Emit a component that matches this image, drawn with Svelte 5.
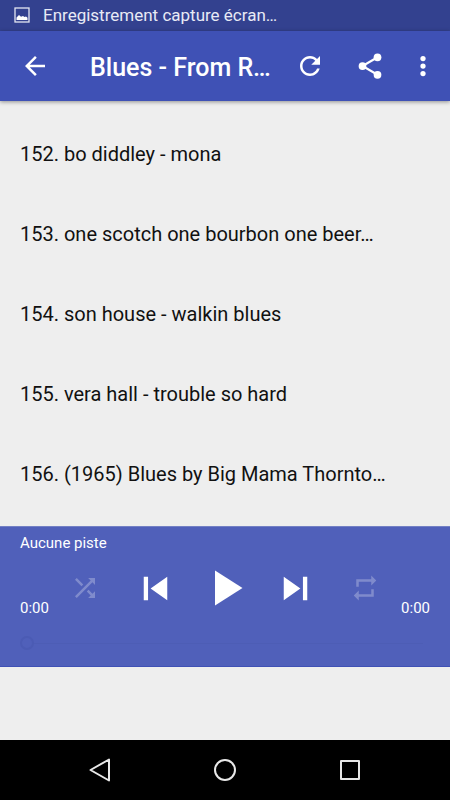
<script>
  const tracks = [
    '152. bo diddley - mona',
    '153. one scotch one bourbon one beer…',
    '154. son house - walkin blues',
    '155. vera hall - trouble so hard',
    '156. (1965) Blues by Big Mama Thornto…'
  ];
  let position = $state(0);
</script>

<div class="screen">
  <div class="status">
    <svg width="16" height="16" viewBox="0 0 16 16" aria-hidden="true">
      <rect x="1" y="1" width="14" height="14" fill="none" stroke="#e4e6f2" stroke-width="1.3" />
      <path d="M2.500 13V10.500L5 8l2 1.800L9 9l1.500 1.100L12 9.500l1.500 1.300V13z" fill="#fff" />
    </svg>
    <span>Enregistrement capture écran…</span>
  </div>

  <header>
    <button class="back" aria-label="Retour">
      <svg class="icon" viewBox="0 0 24 24"><path d="M20 11H7.830l5.590-5.590L12 4l-8 8 8 8 1.410-1.410L7.830 13H20v-2z" /></svg>
    </button>
    <h1>Blues - From R…</h1>
    <button class="action" aria-label="Actualiser">
      <svg class="icon" viewBox="0 0 24 24"><path d="M17.650 6.350C16.200 4.900 14.210 4 12 4c-4.420 0-7.990 3.580-7.990 8s3.570 8 7.990 8c3.730 0 6.840-2.550 7.730-6h-2.080c-.82 2.330-3.040 4-5.650 4-3.310 0-6-2.690-6-6s2.690-6 6-6c1.660 0 3.140.69 4.220 1.780L13 11h7V4l-2.350 2.350z" /></svg>
    </button>
    <button class="action" aria-label="Partager">
      <svg class="icon" viewBox="0 0 24 24">
        <path d="M18 5L6 12l12 7" fill="none" stroke="#fff" stroke-width="1.700" />
        <circle cx="18" cy="5" r="3.100" /><circle cx="6" cy="12" r="3.100" /><circle cx="18" cy="19" r="3.100" />
      </svg>
    </button>
    <button class="more" aria-label="Plus d'options">
      <svg class="icon" viewBox="0 0 24 24"><circle cx="12" cy="6" r="2.100" /><circle cx="12" cy="12" r="2.100" /><circle cx="12" cy="18" r="2.100" /></svg>
    </button>
  </header>

  <ul>
    {#each tracks as track}
      <li><button class="track">{track}</button></li>
    {/each}
  </ul>

  <section class="player" aria-label="Lecteur">
    <p>Aucune piste</p>
    <div class="deck">
      <span class="time">0:00</span>
      <div class="controls">
        <button class="dim" aria-label="Aléatoire">
          <svg class="icon" viewBox="0 0 24 24"><path d="M10.590 9.170L5.410 4 4 5.410l5.170 5.170 1.420-1.410zM14.500 4l2.040 2.040L4 18.590 5.410 20 17.960 7.460 20 9.500V4h-5.500zm.33 9.410l-1.410 1.410 3.130 3.130L14.500 20H20v-5.500l-2.040 2.040-3.130-3.130z" /></svg>
        </button>
        <button aria-label="Précédent">
          <svg class="skip" viewBox="0 0 24 24"><path d="M6 6h2.200v12H6zm3.500 6l8.500 6V6z" /></svg>
        </button>
        <button aria-label="Lecture">
          <svg class="play" viewBox="0 0 24 24"><path d="M8 5v14l11-7z" /></svg>
        </button>
        <button aria-label="Suivant">
          <svg class="skip" viewBox="0 0 24 24"><path d="M6 18l8.500-6L6 6v12zM15.800 6v12H18V6h-2.200z" /></svg>
        </button>
        <button class="dim" aria-label="Répéter">
          <svg class="icon" viewBox="0 0 24 24"><path d="M7 7h10v3l4-4-4-4v3H5v6h2V7zm10 10H7v-3l-4 4 4 4v-3h12v-6h-2v4z" /></svg>
        </button>
      </div>
      <span class="time">0:00</span>
    </div>
    <input type="range" min="0" max="100" bind:value={position} aria-label="Position de lecture" />
  </section>

  <div class="rest"></div>

  <nav>
    <button aria-label="Retour système">
      <svg class="icon line" viewBox="0 0 30 30"><path d="M24 4.500v21L5.500 15z" /></svg>
    </button>
    <button aria-label="Accueil">
      <svg class="icon line" viewBox="0 0 30 30"><circle cx="15" cy="15" r="10" /></svg>
    </button>
    <button aria-label="Applications récentes">
      <svg class="icon line" viewBox="0 0 30 30"><rect x="6" y="6" width="18" height="18" /></svg>
    </button>
  </nav>
</div>

<style>
  :global(body) {
    margin: 0;
    background: #eee;
  }
  .screen {
    display: flex;
    flex-direction: column;
    min-height: 100vh;
    background: #eee;
    font-family: Roboto, "Liberation Sans", sans-serif;
    color: #fff;
  }
  button {
    display: flex;
    align-items: center;
    justify-content: center;
    flex: none;
    margin: 0;
    padding: 0;
    border: 0;
    background: none;
    color: inherit;
    font: inherit;
    cursor: pointer;
  }
  svg {
    display: block;
    flex: none;
    fill: #fff;
  }
  .icon {
    width: 30px;
    height: 30px;
  }
  .status {
    box-sizing: border-box;
    display: flex;
    align-items: center;
    gap: 13px;
    height: 31px;
    padding: 0 14px 2px;
    background: #33418f;
    color: #e8eaf5;
    font-size: 17px;
    line-height: 20px;
  }
  header {
    display: flex;
    align-items: center;
    height: 70px;
    padding-right: 5px;
    background: #3f51b5;
    box-shadow: 0 1px 4px rgba(0, 0, 0, 0.4);
    z-index: 1;
  }
  .back {
    width: 70px;
    height: 70px;
  }
  h1 {
    flex: 1;
    min-width: 0;
    margin: 0;
    padding: 4px 0 0 20px;
    overflow: hidden;
    white-space: nowrap;
    text-overflow: ellipsis;
    font-size: 25px;
    line-height: 30px;
    font-weight: 500;
  }
  .action {
    width: 60px;
    height: 60px;
  }
  .more {
    width: 45px;
    height: 60px;
  }
  ul {
    margin: 0;
    padding: 13px 0 12px;
    list-style: none;
  }
  .track {
    justify-content: flex-start;
    width: 100%;
    height: 80px;
    padding: 0 20px;
    color: #111;
    font-size: 20px;
    line-height: 24px;
    text-align: left;
  }
  .player {
    box-sizing: border-box;
    padding: 7px 20px 13px;
    background: #5060ba;
    border-top: 1px solid #7380c4;
    border-bottom: 1px solid #3f51b5;
  }
  .player p {
    margin: 0;
    font-size: 15px;
    line-height: 18px;
  }
  .deck {
    display: flex;
    justify-content: space-between;
    align-items: flex-end;
    padding-top: 6px;
  }
  .time {
    font-size: 15px;
    line-height: 20px;
  }
  .controls {
    display: flex;
    flex: 0 1 350px;
  }
  .controls button {
    flex: 1;
    height: 60px;
  }
  .skip {
    width: 47px;
    height: 47px;
  }
  .play {
    width: 60px;
    height: 60px;
  }
  .dim {
    opacity: 0.27;
  }
  input {
    display: block;
    appearance: none;
    width: 100%;
    height: 20px;
    margin: 15px 0 0;
    background: linear-gradient(#4d5db5, #4d5db5) center / calc(100% - 14px) 1px no-repeat;
  }
  input::-webkit-slider-thumb {
    appearance: none;
    box-sizing: border-box;
    width: 14px;
    height: 14px;
    border: 2px solid #4b5bb4;
    border-radius: 50%;
    background: #5060ba;
  }
  .rest {
    flex: 1;
  }
  nav {
    display: flex;
    justify-content: center;
    height: 60px;
    background: #000;
  }
  nav button {
    width: 125px;
    height: 60px;
  }
  .line {
    fill: none;
    stroke: #e8e8e8;
    stroke-width: 2;
    stroke-linejoin: round;
  }
</style>
